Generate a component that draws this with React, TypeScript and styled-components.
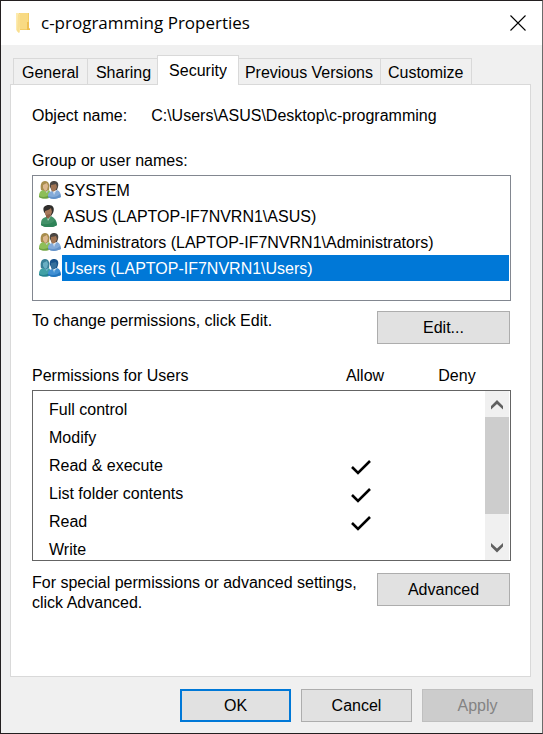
import React, { useState } from "react";
import styled, { createGlobalStyle, css } from "styled-components";

const GlobalStyle = createGlobalStyle`
  *, *::before, *::after { box-sizing: border-box; }
  body {
    margin: 0;
    background: #f0f0f0;
    color: #000;
    font: 16px/20px "Liberation Sans", Arial, sans-serif;
  }
`;

const Dialog = styled.main`
  display: flex;
  flex-direction: column;
  min-height: 100vh;
  background: #f0f0f0;
  border: 1px solid #231f20;
  border-right-color: #6b6b6b;
`;

const TitleBar = styled.header`
  display: flex;
  align-items: center;
  height: 44px;
  padding: 0 16px 0 13px;
  gap: 10px;
  background: #fff;
`;

const Title = styled.h1`
  flex: 1;
  margin: 0;
  font: 400 17px/24px "Open Sans", "Noto Sans", sans-serif;
`;

const CloseButton = styled.button`
  display: flex;
  padding: 0;
  border: 0;
  background: none;
`;

const TabStrip = styled.div`
  display: flex;
  align-items: flex-end;
  padding: 10px 12px 0;
`;

const Tab = styled.button<{ $selected: boolean; $pad: number }>`
  height: 26px;
  padding: 0 ${(p) => p.$pad}px;
  border: 1px solid #d9d9d9;
  border-width: 1px 0 0 1px;
  background: #f0f0f0;
  color: inherit;
  font: inherit;
  white-space: nowrap;
  &:last-child {
    border-right-width: 1px;
  }
  ${(p) =>
    p.$selected &&
    css`
      z-index: 1;
      height: 30px;
      margin: 0 -2px -1px;
      padding: 0 ${p.$pad + 2}px;
      border-right-width: 1px;
      background: #fff;
    `}
`;

const TabLabel = styled.span<{ $selected: boolean }>`
  display: block;
  height: ${(p) => (p.$selected ? 22 : 19)}px;
  padding-top: 1px;
  overflow: hidden;
`;

const Panel = styled.section`
  flex: 1;
  margin: 0 11px 0 9px;
  padding: 21px 19px 20px 21px;
  border: 1px solid #d9d9d9;
  background: #fff;
`;

const ObjectRow = styled.dl`
  display: flex;
  gap: 24px;
  margin: 0 0 25px;
  dd { margin: 0; }
`;

const FieldLabel = styled.div`
  margin-bottom: 4px;
`;

const ListBox = styled.ul`
  min-height: 126px;
  margin: 0;
  padding: 1px;
  border: 1px solid #828790;
  list-style: none;
`;

const ListItem = styled.li`
  display: grid;
  grid-template-columns: 28px 1fr;
  height: 26px;
  cursor: default;
`;

const ItemIcon = styled.span`
  display: flex;
  align-items: center;
  padding-left: 5px;
`;

const ItemText = styled.span<{ $selected: boolean }>`
  height: 26px;
  padding: 0 2px;
  line-height: 28px;
  background: ${(p) => (p.$selected ? "#0078d7" : "transparent")};
  color: ${(p) => (p.$selected ? "#fff" : "inherit")};
`;

const ActionRow = styled.div<{ $top: number }>`
  display: flex;
  justify-content: space-between;
  gap: 12px;
  padding: ${(p) => p.$top}px 1px 0 0;
`;

const Note = styled.p`
  margin: 0;
`;

const Button = styled.button<{ $wide?: boolean; $primary?: boolean }>`
  flex: none;
  width: ${(p) => (p.$wide ? 133 : 111)}px;
  height: 33px;
  padding: 0;
  border: ${(p) => (p.$primary ? "2px solid #0078d7" : "1px solid #adadad")};
  background: #e1e1e1;
  color: #000;
  font: inherit;
  &:disabled {
    border-color: #bfbfbf;
    background: #ccc;
    color: #838383;
  }
`;

const PermHeader = styled.div`
  display: grid;
  grid-template-columns: 1fr 92px 92px;
  margin: 22px 8px 4px 0;
`;

const ColumnTitle = styled.span`
  text-align: center;
`;

const PermBox = styled.div`
  display: flex;
  height: 171px;
  padding-right: 1px;
  border: 1px solid #646464;
`;

const PermViewport = styled.div`
  flex: 1;
  overflow: hidden;
  padding-top: 5px;
`;

const PermTable = styled.table`
  width: 100%;
  border-collapse: collapse;
  table-layout: fixed;
`;

const PermName = styled.th`
  height: 28px;
  padding: 0 0 0 16px;
  font-weight: 400;
  text-align: left;
`;

const PermCell = styled.td<{ $width: number }>`
  width: ${(p) => p.$width}px;
  height: 28px;
  padding: 0;
  svg { display: block; margin: 2px auto 0 32px; }
`;

const ScrollBar = styled.div`
  display: flex;
  flex-direction: column;
  width: 24px;
  background: #f0f0f0;
`;

const ScrollButton = styled.button`
  display: flex;
  align-items: center;
  justify-content: center;
  height: 26px;
  padding: 2px 0 0;
  border: 0;
  background: none;
`;

const ScrollTrack = styled.div`
  flex: 1;
`;

const ScrollThumb = styled.div`
  height: 97px;
  background: #cdcdcd;
`;

const Footer = styled.footer`
  display: flex;
  justify-content: flex-end;
  gap: 10px;
  padding: 12px 9px 11px;
`;

const FolderIcon = () => (
  <svg width="17" height="22" viewBox="0 0 17 22" aria-hidden="true">
    <path d="M5 1h10v15l1 1v1H5z" fill="#f3cd68" />
    <path d="M6 1h8v16H6z" fill="#f8da83" />
    <path d="M2 1h3l1 2v17l-1 1-3-3z" fill="#fdebaf" />
    <path d="M4 2l2 1v11l-1 7-2-2z" fill="#f9df92" />
    <path d="M13 10h2v6l1 1v1h-3z" fill="#eebf52" />
  </svg>
);

const CloseIcon = () => (
  <svg width="16" height="16" viewBox="0 0 16 16" aria-hidden="true">
    <path d="M.5.5l15 15M15.5.5l-15 15" stroke="#000" strokeWidth="1.1" fill="none" />
  </svg>
);

const GroupIcon = ({ tinted }: { tinted: boolean }) => {
  const c = tinted
    ? { hair: "#397f97", face: "#6aafc3", cloth: "#41a0a5", clothDark: "#25828f", hair2: "#17528b", face2: "#356f9b", cloth2: "#408fd3", cloth2Dark: "#2376bd", collar: "#7db9df" }
    : { hair: "#a78d4c", face: "#dcb88f", cloth: "#8dbe58", clothDark: "#6d9f42", hair2: "#4a4642", face2: "#a07453", cloth2: "#84abd9", cloth2Dark: "#6593c9", collar: "#c9dcee" };
  return (
    <svg width="22" height="18" viewBox="0 0 22 18" aria-hidden="true">
      <path d="M2 9C1 4 2 0 6 0s5 4 4 9L7 11z" fill={c.hair} />
      <path d="M4 4l4-2 1 3-1 4-2 1-2-3z" fill={c.face} />
      <path d="M0 16c0-4 1-6 4-7l3 2 3-2c2 2 2 5 2 7-3 2-8 2-12 0z" fill={c.cloth} />
      <path d="M0 15c4 2 8 1 11-2v3c-3 2-8 2-11 0z" fill={c.clothDark} />
      <path d="M5 9l2 2 2-2-1 3z" fill={c.collar} />
      <path d="M11 6c-1-4 1-6 4-6s5 2 4 6l-1 3-5 1z" fill={c.hair2} />
      <path d="M12 4c2 0 4-1 5-1l1 3-2 4-3 1-1-4z" fill={c.face2} />
      <path d="M9 16c0-4 1-5 4-6l2 2 3-3c3 1 4 4 4 7-4 2-9 3-13 0z" fill={c.cloth2} />
      <path d="M9 15c5 2 9 1 12-2l1 3c-4 2-9 3-13 0z" fill={c.cloth2Dark} />
      <path d="M14 11l1 1 2-2-2 4z" fill={c.collar} />
    </svg>
  );
};

const UserIcon = ({ tinted }: { tinted: boolean }) => (
  <svg width="22" height="22" viewBox="0 0 22 22" aria-hidden="true">
    <path d="M5 7C3 2 6 0 10 0s6 3 4 8l-2 3-5-1z" fill={tinted ? "#17528b" : "#302e2c"} />
    <path d="M6 6c2-1 4-1 6-3l1 4-2 5-3 1-2-4z" fill={tinted ? "#3a789f" : "#a7795c"} />
    <path d="M7 10l4-1 1 4-3 2-2-2z" fill={tinted ? "#2e668d" : "#8d6047"} />
    <path d="M2 20c0-5 1-7 5-8l2 2 3-3c4 2 6 5 6 9-4 3-12 3-16 0z" fill={tinted ? "#268ba0" : "#429168"} />
    <path d="M2 19c6 1 11 0 14-4l2 5c-4 3-12 3-16 0z" fill={tinted ? "#187f96" : "#2f8358"} />
    <path d="M8 13l1 1 3-3-3 5z" fill={tinted ? "#7fbad2" : "#b9d6c5"} />
  </svg>
);

const CheckIcon = () => (
  <svg width="22" height="18" viewBox="0 0 22 18" role="img" aria-label="Allowed">
    <path d="M1 9L7 15L19 3" fill="none" stroke="#000" strokeWidth="2.6" />
  </svg>
);

const Chevron = ({ down }: { down?: boolean }) => (
  <svg width="12" height="10" viewBox="0 0 12 10" aria-hidden="true">
    <path
      d={down ? "M0 0L6 5.5L12 0v3.5L6 9.5L0 3.5z" : "M0 9.5L6 4L12 9.5V6L6 0L0 6z"}
      fill="#606060"
    />
  </svg>
);

const tabs = [
  { name: "General", pad: 8 },
  { name: "Sharing", pad: 8 },
  { name: "Security", pad: 9 },
  { name: "Previous Versions", pad: 7 },
  { name: "Customize", pad: 7 },
];

const principals = [
  { name: "SYSTEM", group: true },
  { name: "ASUS (LAPTOP-IF7NVRN1\\ASUS)", group: false },
  { name: "Administrators (LAPTOP-IF7NVRN1\\Administrators)", group: true },
  { name: "Users (LAPTOP-IF7NVRN1\\Users)", group: true },
];

const permissions = [
  { name: "Full control", allow: false },
  { name: "Modify", allow: false },
  { name: "Read & execute", allow: true },
  { name: "List folder contents", allow: true },
  { name: "Read", allow: true },
  { name: "Write", allow: false },
];

export default function App() {
  const [tab, setTab] = useState("Security");
  const [selected, setSelected] = useState(3);

  return (
    <>
      <GlobalStyle />
      <Dialog>
        <TitleBar>
          <FolderIcon />
          <Title>c-programming Properties</Title>
          <CloseButton aria-label="Close">
            <CloseIcon />
          </CloseButton>
        </TitleBar>

        <TabStrip role="tablist">
          {tabs.map((t) => (
            <Tab
              key={t.name}
              role="tab"
              aria-selected={t.name === tab}
              $selected={t.name === tab}
              $pad={t.pad}
              onClick={() => setTab(t.name)}
            >
              <TabLabel $selected={t.name === tab}>{t.name}</TabLabel>
            </Tab>
          ))}
        </TabStrip>

        <Panel role="tabpanel">
          <ObjectRow>
            <dt>Object name:</dt>
            <dd>C:\Users\ASUS\Desktop\c-programming</dd>
          </ObjectRow>

          <FieldLabel id="names-label">Group or user names:</FieldLabel>
          <ListBox role="listbox" aria-labelledby="names-label" tabIndex={0}>
            {principals.map((p, i) => (
              <ListItem
                key={p.name}
                role="option"
                aria-selected={i === selected}
                onClick={() => setSelected(i)}
              >
                <ItemIcon>
                  {p.group ? <GroupIcon tinted={i === selected} /> : <UserIcon tinted={i === selected} />}
                </ItemIcon>
                <ItemText $selected={i === selected}>{p.name}</ItemText>
              </ListItem>
            ))}
          </ListBox>

          <ActionRow $top={10}>
            <Note>To change permissions, click Edit.</Note>
            <Button $wide>Edit...</Button>
          </ActionRow>

          <PermHeader>
            <span id="perm-label">Permissions for Users</span>
            <ColumnTitle id="col-allow">Allow</ColumnTitle>
            <ColumnTitle id="col-deny">Deny</ColumnTitle>
          </PermHeader>
          <PermBox>
            <PermViewport>
              <PermTable aria-labelledby="perm-label">
                <tbody>
                  {permissions.map((p) => (
                    <tr key={p.name}>
                      <PermName scope="row">{p.name}</PermName>
                      <PermCell $width={92} aria-describedby="col-allow">
                        {p.allow && <CheckIcon />}
                      </PermCell>
                      <PermCell $width={74} aria-describedby="col-deny" />
                    </tr>
                  ))}
                </tbody>
              </PermTable>
            </PermViewport>
            <ScrollBar>
              <ScrollButton aria-label="Scroll up">
                <Chevron />
              </ScrollButton>
              <ScrollTrack>
                <ScrollThumb />
              </ScrollTrack>
              <ScrollButton aria-label="Scroll down">
                <Chevron down />
              </ScrollButton>
            </ScrollBar>
          </PermBox>

          <ActionRow $top={12}>
            <Note>
              For special permissions or advanced settings, click Advanced.
            </Note>
            <Button $wide>Advanced</Button>
          </ActionRow>
        </Panel>

        <Footer>
          <Button $primary>OK</Button>
          <Button>Cancel</Button>
          <Button disabled>Apply</Button>
        </Footer>
      </Dialog>
    </>
  );
}
